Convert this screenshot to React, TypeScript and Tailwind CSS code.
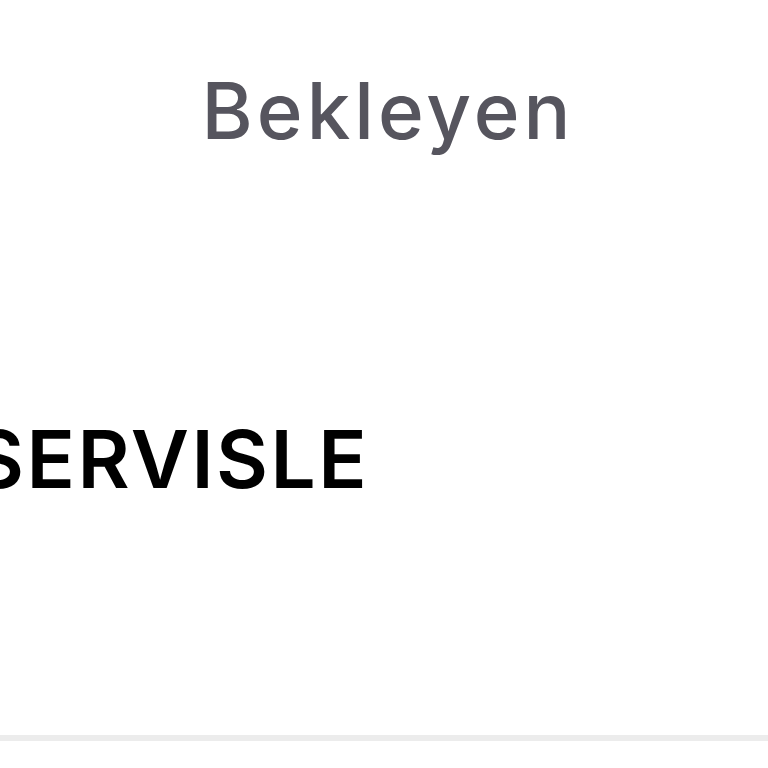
import React from "react";

export default function App() {
  return (
    <div className="w-[768px] h-[768px] bg-white overflow-hidden flex flex-col" style={{ fontFamily: "Inter, 'Noto Sans', sans-serif" }}>
      <div className="h-[735px] flex flex-col">
        <div className="pt-[56px] flex justify-center pl-[8px]">
          <span className="text-[78px] leading-[110px] font-medium text-[#56555e] tracking-[4px]">Bekleyen</span>
        </div>
        <div className="mt-[243px] flex">
          <span className="ml-[-28px] text-[80px] leading-[100px] font-semibold text-black whitespace-nowrap tracking-[2.5px]">SERVISLE</span>
        </div>
      </div>
      <div className="h-[6px] bg-[#ececec]" />
      <div className="flex-1 bg-white" />
    </div>
  );
}
